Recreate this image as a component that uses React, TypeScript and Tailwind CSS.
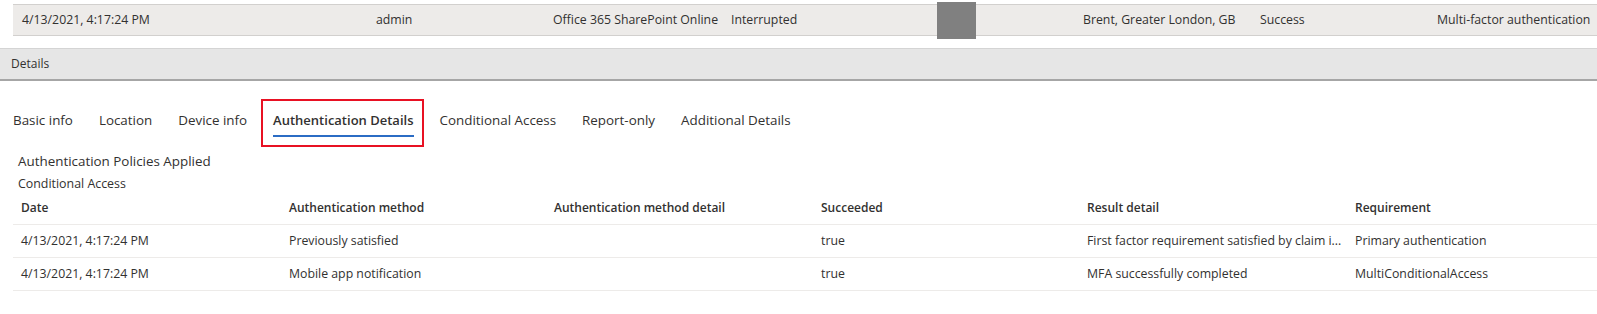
import React from 'react';

const tabs = ['Basic info', 'Location', 'Device info', 'Authentication Details', 'Conditional Access', 'Report-only', 'Additional Details'];

const rows = [
  ['4/13/2021, 4:17:24 PM', 'Previously satisfied', '', 'true', 'First factor requirement satisfied by claim i...', 'Primary authentication'],
  ['4/13/2021, 4:17:24 PM', 'Mobile app notification', '', 'true', 'MFA successfully completed', 'MultiConditionalAccess'],
];

const headers = ['Date', 'Authentication method', 'Authentication method detail', 'Succeeded', 'Result detail', 'Requirement'];

const App: React.FC = () => {
  return (
    <div className="w-[1597px] h-[314px] overflow-hidden bg-white text-[#323130] font-['Open_Sans',sans-serif]">
      {/* sign-in row */}
      <div className="mt-[4px] ml-[13px] h-[32px] bg-[#edebe9] border-y border-[#d2d0ce] flex items-center text-[12.3px] whitespace-nowrap">
        <div className="w-[363px] pl-[9px]">4/13/2021, 4:17:24 PM</div>
        <div className="w-[177px]">admin</div>
        <div className="w-[178px]">Office 365 SharePoint Online</div>
        <div className="w-[206px]">Interrupted</div>
        <div className="w-[39px] h-[37px] bg-[#808080]"></div>
        <div className="w-[107px]"></div>
        <div className="w-[177px]">Brent, Greater London, GB</div>
        <div className="w-[177px]">Success</div>
        <div>Multi-factor authentication</div>
      </div>

      {/* details bar */}
      <div className="mt-[12px] h-[33px] bg-[#e6e6e6] border-t border-[#d4d4d4] border-b-2 border-b-[#a6a6a6] flex items-center pl-[11px] text-[12px]">
        Details
      </div>

      {/* tabs */}
      <div className="mt-[19px] flex">
        {tabs.map((t) => {
          const active = t === 'Authentication Details';
          return (
            <div key={t} className="relative px-[13px] h-[40px] pt-[10px]">
              <div className={`leading-[20px] whitespace-nowrap ${active ? 'font-semibold text-[13px]' : 'text-[13.4px]'}`}>{t}</div>
              {active && (
                <>
                  <div className="mt-[5px] h-[2px] bg-[#2b6cc4]"></div>
                  <div className="absolute left-[1px] right-[3px] top-[-1px] bottom-[-7px] border-2 border-[#e81123]"></div>
                </>
              )}
            </div>
          );
        })}
      </div>

      <div className="mt-[11px] pl-[18px] text-[13.4px] leading-[20px]">Authentication Policies Applied</div>
      <div className="mt-[3px] pl-[18px] text-[12.4px] leading-[20px]">Conditional Access</div>

      {/* table */}
      <div className="ml-[13px] text-[12.3px]">
        <div className="grid grid-cols-[268px_265px_267px_266px_268px_1fr] h-[31px] pb-[3px] items-center border-b border-[#edebe9] font-semibold text-[12px]">
          {headers.map((h) => (
            <div key={h} className="pl-[8px] whitespace-nowrap">{h}</div>
          ))}
        </div>
        {rows.map((r, i) => (
          <div key={i} className="grid grid-cols-[268px_265px_267px_266px_268px_1fr] h-[33px] items-center border-b border-[#edebe9]">
            {r.map((c, j) => (
              <div key={j} className="pl-[8px] whitespace-nowrap">{c}</div>
            ))}
          </div>
        ))}
      </div>
    </div>
  );
};

export default App;
